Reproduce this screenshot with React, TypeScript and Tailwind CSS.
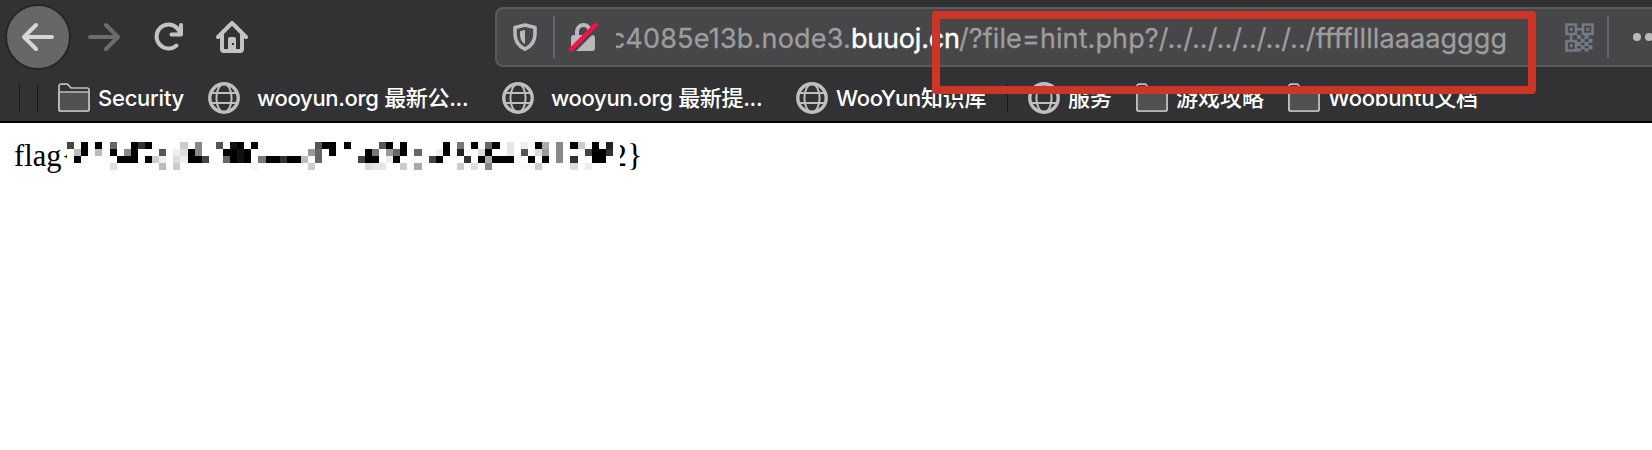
import type { ReactNode } from "react";

const MOSAIC: [number, string][][] = [
  [[0,"#444"],[2,"#000"],[4,"#000"],[6,"#666"],[9,"#000"],[10,"#333"],[11,"#000"],[16,"#ccc"],[18,"#888"],[21,"#555"],[23,"#111"],[24,"#000"],[26,"#000"],[35,"#555"],[36,"#000"],[37,"#000"],[39,"#000"],[44,"#555"],[45,"#000"],[47,"#000"],[53,"#000"],[55,"#777"],[57,"#000"],[59,"#666"],[60,"#000"],[62,"#e5e5e5"],[64,"#eee"],[66,"#000"],[67,"#aaa"],[69,"#888"],[71,"#000"],[72,"#ccc"],[74,"#000"],[76,"#222"]],
  [[1,"#bbb"],[2,"#000"],[4,"#bbb"],[6,"#000"],[8,"#888"],[9,"#000"],[13,"#555"],[15,"#eee"],[16,"#ddd"],[17,"#000"],[18,"#888"],[22,"#000"],[23,"#000"],[24,"#111"],[25,"#000"],[34,"#999"],[35,"#666"],[37,"#000"],[42,"#000"],[43,"#777"],[45,"#999"],[46,"#666"],[47,"#000"],[49,"#666"],[52,"#eee"],[53,"#000"],[55,"#222"],[58,"#ddd"],[59,"#000"],[62,"#e8e8e8"],[64,"#555"],[66,"#ddd"],[67,"#999"],[69,"#888"],[73,"#444"],[74,"#000"],[75,"#000"],[76,"#333"]],
  [[1,"#000"],[2,"#f8f8f8"],[7,"#000"],[8,"#000"],[9,"#000"],[11,"#000"],[12,"#ccc"],[13,"#eee"],[15,"#ddd"],[16,"#eee"],[17,"#000"],[18,"#000"],[19,"#444"],[22,"#666"],[23,"#000"],[24,"#111"],[25,"#000"],[27,"#777"],[28,"#000"],[29,"#000"],[30,"#333"],[31,"#000"],[32,"#000"],[33,"#bbb"],[35,"#666"],[41,"#444"],[42,"#000"],[43,"#000"],[45,"#eee"],[46,"#000"],[51,"#444"],[52,"#000"],[56,"#333"],[58,"#000"],[59,"#aaa"],[60,"#000"],[61,"#000"],[62,"#000"],[63,"#f8f8f8"],[65,"#000"],[67,"#000"],[69,"#888"],[71,"#333"],[74,"#000"],[75,"#000"]],
  [[6,"#e0e0e0"],[13,"#bbb"],[15,"#ccc"],[26,"#f5f5f5"],[34,"#ccc"],[42,"#ddd"],[43,"#e5e5e5"],[44,"#e5e5e5"],[47,"#ccc"],[49,"#aaa"],[55,"#ccc"],[57,"#ddd"],[59,"#888"],[64,"#fafafa"],[66,"#ccc"],[71,"#ddd"],[73,"#eee"]],
];

function Globe() {
  return (
    <svg className="h-8 w-8 shrink-0" viewBox="0 0 32 32" fill="none" stroke="#bfbfc0">
      <circle cx="16" cy="16" r="14.2" strokeWidth="3.4" />
      <ellipse cx="16" cy="16" rx="7.6" ry="14" strokeWidth="2" />
      <path d="M3 11h26M3 21h26" strokeWidth="2" />
    </svg>
  );
}

function Folder() {
  return (
    <svg className="h-8 w-8 shrink-0" viewBox="0 0 32 32" stroke="#bfbfc0" strokeWidth="1.7" strokeLinejoin="round">
      <path d="M1 27V4.5C1 3 1.8 2.2 3 2.2h6.5L13 6h16q2 0 2 2v19q0 2-2 2H3q-2 0-2-2z" fill="#323234" />
      <path d="M1 10h30v17q0 2-2 2H3q-2 0-2-2z" fill="#505052" />
    </svg>
  );
}

function QrCode() {
  return (
    <svg className="ml-[57px] h-[29px] w-[29px] shrink-0" viewBox="0 0 29 29">
      <g fill="none" stroke="#737b87" strokeWidth="2.6">
        <path d="M1.500 1.500h9.500v9.500H1.500zM18 1.500h9.500v9.500H18zM1.500 18h9.500v9.500H1.500zM11 6.200h7M6.200 11v7" />
      </g>
      <g fill="#737b87">
        <path d="M4.800 4.800h3v3h-3zM21.300 4.800h3v3h-3zM4.800 21.300h3v3h-3z" />
        <path d="M12 12h4v4h-4zM19.500 12h4v4h-4zM15.700 15.700h4v4h-4zM23.500 15.700h4v4h-4zM12 19h4v4h-4zM19.500 19h4v4h-4zM15.700 22.300h4v4h-4zM23.500 22.300h4v4h-4zM12 25.500h4v3h-4zM19.500 25.500h4v3h-4z" />
      </g>
    </svg>
  );
}

function Label({ className, children }: { className: string; children: ReactNode }) {
  return <span className={`shrink-0 whitespace-nowrap ${className}`}>{children}</span>;
}

function Toolbar() {
  return (
    <div className="flex h-[75px] items-start">
      <div className="mt-1 ml-[5px] flex h-[66px] w-[66px] shrink-0 items-center justify-center rounded-full border-2 border-[#262628] bg-[#676769]">
        <svg className="h-8 w-8" viewBox="0 0 32 32" fill="none" stroke="#d6d6d7" strokeWidth="4" strokeLinecap="round" strokeLinejoin="round">
          <path d="M30 16H2M14 4L2 16l12 12" />
        </svg>
      </div>
      <svg className="mt-[21px] ml-[17px] h-8 w-8 shrink-0" viewBox="0 0 32 32" fill="none" stroke="#6c6c6e" strokeWidth="4" strokeLinecap="round" strokeLinejoin="round">
        <path d="M2 16h28M18 4l12 12-12 12" />
      </svg>
      <svg className="mt-[21px] ml-8 h-8 w-8 shrink-0" viewBox="0 0 32 32" fill="none" stroke="#c3c3c4" strokeWidth="4" strokeLinecap="round" strokeLinejoin="round">
        <path d="M24.500 24.500A12 12 0 1 1 25 7l3 4M29 4v9.500H19.500" />
      </svg>
      <svg className="mt-[21px] ml-8 h-8 w-8 shrink-0" viewBox="0 0 32 32" fill="none" stroke="#c3c3c4" strokeWidth="4" strokeLinecap="round" strokeLinejoin="round">
        <path d="M2 16L16 2l14 14" />
        <path d="M6 14v14q0 2 2 2h16q2 0 2-2V14" />
        <path d="M12 29V18q0-2 2-2h4q2 0 2 2v11z" fill="#c3c3c4" stroke="none" />
        <path d="M16 22h2v2h-2z" fill="#323234" stroke="none" />
      </svg>
      <div className="mt-[7px] ml-[247px] flex h-[60px] w-[1170px] shrink-0 items-center rounded-l-lg border-2 border-[#5b5b5d] bg-[#474749]">
        <svg className="ml-4 h-7 w-6 shrink-0" viewBox="0 0 24 28" fill="none" stroke="#b9b9ba" strokeWidth="3.600" strokeLinejoin="round">
          <path d="M12 2L22 4.500V11c0 7.500-3.500 12-10 15.200C5.500 23 2 18.500 2 11V4.500z" />
          <path d="M12 7v14.500C8.500 19 7 16 7 11.500V8.300z" fill="#b9b9ba" stroke="none" />
        </svg>
        <div className="ml-4 h-[42px] w-[2px] shrink-0 bg-[#5f6670]" />
        <svg className="ml-3.5 h-[30px] w-8 shrink-0" viewBox="0 0 32 30">
          <path d="M8 14V9.500a6.500 6.500 0 0 1 13 0V14" fill="none" stroke="#b9b9ba" strokeWidth="4" />
          <rect x="2" y="13" width="24" height="16" rx="3" fill="#b9b9ba" />
          <path d="M4 30L30 4" stroke="#474749" strokeWidth="3" />
          <path d="M2 27.500L26.500 3" stroke="#ff0d45" strokeWidth="4.200" strokeLinecap="round" />
        </svg>
        <div className="mt-[5px] ml-[15px] flex h-11 w-[892px] shrink-0 items-center font-['Inter',sans-serif] text-[27px] whitespace-nowrap text-[#9d9d9e]">
          <span className="flex w-[235px] shrink-0 justify-end overflow-hidden tracking-[0.2px] [-webkit-text-stroke:0.3px_#9d9d9e]">c4085e13b.node3.</span>
          <span className="w-[108px] shrink-0 tracking-[-0.2px] text-white [-webkit-text-stroke:0.4px_white]">buuoj.cn</span>
          <span className="shrink-0 tracking-[0.1px] [-webkit-text-stroke:0.3px_#9d9d9e]">/?file=hint.php?/../../../../../../ffffllllaaaagggg</span>
        </div>
        <QrCode />
        <div className="ml-[13px] h-[42px] w-[2px] shrink-0 bg-[#5f6670]" />
        <svg className="ml-6 h-2 w-8 shrink-0" viewBox="0 0 32 8" fill="#b9b9ba">
          <circle cx="4" cy="4" r="4" />
          <circle cx="16" cy="4" r="4" />
          <circle cx="28" cy="4" r="4" />
        </svg>
      </div>
    </div>
  );
}

function Bookmarks() {
  return (
    <div className="flex h-[46px] items-center font-['Inter','Noto_Sans_CJK_SC',sans-serif] text-[22px] leading-8 font-medium tracking-[-0.25px] text-white">
      <div className="ml-[19px] h-7 w-px shrink-0 bg-[#1b1b1d]" />
      <div className="mr-5 ml-[17px] h-7 w-px shrink-0 bg-[#1b1b1d]" />
      <Folder />
      <Label className="ml-2 w-[110px]">Security</Label>
      <Globe />
      <Label className="ml-[17px] w-[245px] tracking-[-0.32px]">wooyun.org 最新公...</Label>
      <Globe />
      <Label className="ml-[17px] w-[245px] tracking-[-0.32px]">wooyun.org 最新提...</Label>
      <Globe />
      <Label className="ml-2 w-[171px]">WooYun知识库</Label>
      <div className="mr-5 h-7 w-px shrink-0 bg-[#1b1b1d]" />
      <Globe />
      <Label className="ml-2 w-[68px]">服务</Label>
      <Folder />
      <Label className="ml-2 w-[112px] tracking-normal">游戏攻略</Label>
      <Folder />
      <Label className="ml-2">Woobuntu文档</Label>
    </div>
  );
}

export default function App() {
  return (
    <div className="relative flex h-[450px] w-[1652px] flex-col overflow-hidden bg-white">
      <header className="h-[123px] shrink-0 overflow-hidden border-b-2 border-black bg-[#323234]">
        <Toolbar />
        <Bookmarks />
      </header>
      <main className="flex items-start pl-[14px] font-['Liberation_Serif',serif] text-[32px] leading-9 text-black">
        <span className="mt-[15px] w-[53px] shrink-0 overflow-hidden text-[30.500px] whitespace-nowrap">flag{"{"}</span>
        <svg className="mt-[19px] h-7 w-[546px] shrink-0" viewBox="0 0 77 4" preserveAspectRatio="none" shapeRendering="crispEdges">
          {MOSAIC.map((row, y) => row.map(([x, fill]) => <rect key={`${x}-${y}`} x={x} y={y} width="1" height="1" fill={fill} />))}
        </svg>
        <span className="mt-[14px] ml-[7px] flex w-[7px] shrink-0 justify-end overflow-hidden">2</span>
        <span className="mt-[14px]">{"}"}</span>
      </main>
      <div className="absolute top-[11px] left-[932px] h-[83px] w-[604px] rounded-[4px] border-8 border-[#cd3526]" />
    </div>
  );
}
